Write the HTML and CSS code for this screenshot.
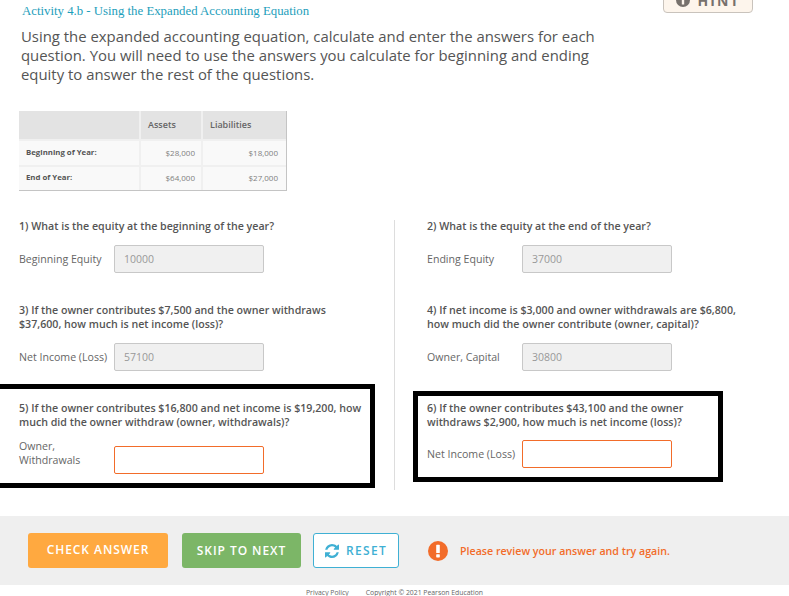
FILE: index.html
```html
<!DOCTYPE html>
<html lang="en">
<head>
    <meta charset="UTF-8">
    <meta name="viewport" content="width=device-width, initial-scale=1.0">
    <title>Activity 4.b</title>
    <link rel="stylesheet" href="styles.css">
</head>
<body>
    <div class="content">
        <div class="header">
            <div class="heading">
                <div class="activity-title">Activity 4.b - Using the Expanded Accounting Equation</div>
                <p class="intro">Using the expanded accounting equation, calculate and enter the answers for each question. You will need to use the answers you calculate for beginning and ending equity to answer the rest of the questions.</p>
            </div>
            <div class="hint">
                <svg class="hint-icon" viewBox="0 0 14 14"><circle cx="7" cy="7" r="7" fill="#77716c"/><rect x="5.8" y="6" width="2.4" height="5.5" fill="#fdf5ec"/><rect x="5.8" y="2.5" width="2.4" height="2.2" fill="#fdf5ec"/></svg>
                <span>HINT</span>
            </div>
        </div>

        <table class="data-table">
            <tr>
                <th class="col-label"></th>
                <th class="col-assets">Assets</th>
                <th class="col-liab">Liabilities</th>
            </tr>
            <tr>
                <td class="row-label">Beginning of Year:</td>
                <td>$28,000</td>
                <td>$18,000</td>
            </tr>
            <tr>
                <td class="row-label">End of Year:</td>
                <td>$64,000</td>
                <td>$27,000</td>
            </tr>
        </table>

        <div class="questions">
            <div class="col col-left">
                <div class="question q-first">
                    <p class="q-text">1) What is the equity at the beginning of the year?</p>
                    <div class="field">
                        <label class="field-label">Beginning Equity</label>
                        <input class="answer" type="text" value="10000" disabled>
                    </div>
                </div>
                <div class="question q-second">
                    <p class="q-text">3) If the owner contributes $7,500 and the owner withdraws $37,600, how much is net income (loss)?</p>
                    <div class="field">
                        <label class="field-label">Net Income (Loss)</label>
                        <input class="answer" type="text" value="57100" disabled>
                    </div>
                </div>
                <div class="question marked marked-left">
                    <p class="q-text">5) If the owner contributes $16,800 and net income is $19,200, how much did the owner withdraw (owner, withdrawals)?</p>
                    <div class="field field-wrap">
                        <label class="field-label">Owner, Withdrawals</label>
                        <input class="answer wrong" type="text">
                    </div>
                </div>
            </div>
            <div class="col col-right">
                <div class="question q-first">
                    <p class="q-text">2) What is the equity at the end of the year?</p>
                    <div class="field">
                        <label class="field-label">Ending Equity</label>
                        <input class="answer" type="text" value="37000" disabled>
                    </div>
                </div>
                <div class="question q-second q-narrow">
                    <p class="q-text">4) If net income is $3,000 and owner withdrawals are $6,800, how much did the owner contribute (owner, capital)?</p>
                    <div class="field">
                        <label class="field-label">Owner, Capital</label>
                        <input class="answer" type="text" value="30800" disabled>
                    </div>
                </div>
                <div class="question marked marked-right">
                    <p class="q-text">6) If the owner contributes $43,100 and the owner withdraws $2,900, how much is net income (loss)?</p>
                    <div class="field">
                        <label class="field-label">Net Income (Loss)</label>
                        <input class="answer wrong" type="text">
                    </div>
                </div>
            </div>
        </div>
    </div>

    <div class="actions">
        <button class="btn btn-check">CHECK ANSWER</button>
        <button class="btn btn-skip">SKIP TO NEXT</button>
        <button class="btn btn-reset">
            <svg class="reset-icon" viewBox="0 0 1536 1536"><path fill="#3fb0d4" d="M1511 928q0 5-1 7-64 268-268 434.5t-478 166.5q-146 0-282.5-55t-243.5-157l-129 129q-19 19-45 19t-45-19-19-45v-448q0-26 19-45t45-19h448q26 0 45 19t19 45-19 45l-137 137q71 66 161 102t187 36q134 0 250-65t186-179q11-17 53-117 8-23 30-23h192q13 0 22.5 9.5t9.5 22.5zm25-800v448q0 26-19 45t-45 19h-448q-26 0-45-19t-19-45 19-45l138-138q-148-137-349-137-134 0-250 65t-186 179q-11 17-53 117-8 23-30 23h-199q-13 0-22.5-9.5t-9.5-22.5v-7q65-268 270-434.5t480-166.5q146 0 284 55.5t245 156.5l130-129q19-19 45-19t45 19 19 45z"/></svg>
            RESET
        </button>
        <div class="feedback">
            <svg class="alert-icon" viewBox="0 0 20 20"><circle cx="10" cy="10" r="10" fill="#f26c2a"/><rect x="8.2" y="3.8" width="3.6" height="8.2" rx="0.6" fill="#fff"/><rect x="8.2" y="13.2" width="3.6" height="3.2" rx="0.6" fill="#fff"/></svg>
            <span>Please review your answer and try again.</span>
        </div>
    </div>

    <div class="footer">
        <span>Privacy Policy</span>
        <span>Copyright © 2021 Pearson Education</span>
    </div>
</body>
</html>
```

FILE: styles.css
```css
* {
    box-sizing: border-box;
}

html, body {
    height: 596px;
    overflow: hidden;
}

body {
    margin: 0;
    font-family: "Open Sans", sans-serif;
    background-color: #ffffff;
    color: #555555;
}

.content {
    height: 516px;
    padding-left: 19px;
}

/* Header */
.header {
    display: flex;
    height: 111px;
}

.heading {
    width: 644px;
    flex: none;
    padding-left: 3px;
}

.activity-title {
    font-family: "Liberation Serif", serif;
    font-size: 12.8px;
    line-height: 14px;
    margin-top: 4px;
    color: #1d9ebb;
}

.intro {
    margin: 9px 0 0 -1px;
    width: 590px;
    font-size: 14.9px;
    line-height: 19px;
    color: #555555;
}

.hint {
    display: flex;
    align-items: center;
    justify-content: center;
    gap: 8px;
    width: 90px;
    height: 26px;
    margin-top: -13px;
    background-color: #fdf5ec;
    border: 1px solid #c9c3bc;
    border-radius: 4px;
    font-size: 14px;
    font-weight: 700;
    letter-spacing: 2px;
    color: #77716c;
}

.hint-icon {
    width: 14px;
    height: 14px;
}

/* Table */
.data-table {
    border-collapse: separate;
    border-spacing: 0;
    width: 268px;
    height: 80px;
    table-layout: fixed;
    background-color: #f0f0f0;
    border-right: 1px solid #c4c4c4;
    border-bottom: 1px solid #c4c4c4;
    font-size: 8px;
}

.col-label {
    width: 122px;
}

.col-assets {
    width: 62px;
}

.data-table th {
    height: 28px;
    background-color: #e3e3e3;
    border-right: 2px solid #f0f0f0;
    font-size: 9px;
    font-weight: 600;
    text-align: left;
    padding: 0 0 2px 7px;
    color: #666666;
}

.data-table th:last-child {
    border-right: none;
}

.data-table td {
    height: 25px;
    background-color: #f9f9f9;
    border-top: 2px solid #f0f0f0;
    border-right: 2px solid #f0f0f0;
    text-align: right;
    padding: 0 6px 2px 0;
    color: #808080;
}

.data-table td:last-child {
    border-right: none;
    padding-right: 8px;
}

.data-table td.row-label {
    text-align: left;
    padding: 0 0 2px 7px;
    font-size: 7.8px;
    font-weight: 700;
    color: #555555;
}

/* Questions */
.questions {
    display: grid;
    grid-template-columns: 375px 395px;
    margin-top: 28px;
}

.col-right {
    position: relative;
    padding-left: 33px;
}

.col-right::before {
    content: "";
    position: absolute;
    left: 0;
    top: 1px;
    bottom: -2px;
    width: 1px;
    background-color: #dddddd;
}

.question {
    width: 345px;
}

.q-narrow {
    width: 320px;
}

.q-first {
    height: 84px;
}

.q-second {
    height: 98px;
}

.q-text {
    margin: 0;
    font-size: 10.65px;
    line-height: 14px;
    font-weight: 600;
    color: #555555;
}

.field {
    display: flex;
    align-items: center;
    margin-top: 12px;
}

.field-label {
    width: 95px;
    flex: none;
    font-size: 10.6px;
    line-height: 14px;
    color: #666666;
}

.answer {
    width: 150px;
    height: 28px;
    padding: 0 9px;
    background-color: #f0f0f0;
    border: 1px solid #c8c8c8;
    border-radius: 2px;
    font-family: inherit;
    font-size: 10.5px;
    color: #999999;
}

.answer.wrong {
    background-color: #ffffff;
    border-color: #f26c2a;
}

.marked {
    border: 5px solid #000000;
}

.marked-left {
    width: 380px;
    height: 104px;
    margin-top: -17px;
    margin-left: -24px;
    padding: 12px 5px 0 19px;
}

.marked-right {
    width: 310px;
    height: 91px;
    margin-top: -10px;
    margin-left: -14px;
    padding: 5px 9px 0 9px;
}

.marked-left .field {
    align-items: flex-start;
    margin-top: 10px;
}

.marked-left .answer {
    margin-top: 7px;
}

.marked-right .field {
    margin-top: 11px;
}

/* Bottom bar */
.actions {
    display: flex;
    align-items: center;
    height: 69px;
    padding-left: 28px;
    background-color: #efefef;
}

.btn {
    display: flex;
    align-items: center;
    justify-content: center;
    height: 35px;
    border: none;
    border-radius: 3px;
    font-family: inherit;
    font-size: 12px;
    font-weight: 600;
    letter-spacing: 0.95px;
    color: #ffffff;
}

.btn-check {
    width: 140px;
    margin-right: 14px;
    padding-bottom: 3px;
    background-color: #ffa940;
}

.btn-skip {
    width: 119px;
    margin-right: 12px;
    background-color: #7cb667;
}

.btn-reset {
    width: 86px;
    gap: 7px;
    background-color: #ffffff;
    border: 1px solid #3fb0d4;
    letter-spacing: 1.3px;
    color: #3fb0d4;
}

.reset-icon {
    width: 14px;
    height: 14px;
}

.feedback {
    display: flex;
    align-items: center;
    gap: 12px;
    margin-left: 29px;
    font-size: 10.65px;
    font-weight: 600;
    color: #f26c2a;
}

.alert-icon {
    width: 20px;
    height: 20px;
}

/* Footer */
.footer {
    display: flex;
    gap: 17px;
    padding: 3px 0 0 306px;
    font-size: 6.85px;
    line-height: 9px;
    color: #666666;
}
```
